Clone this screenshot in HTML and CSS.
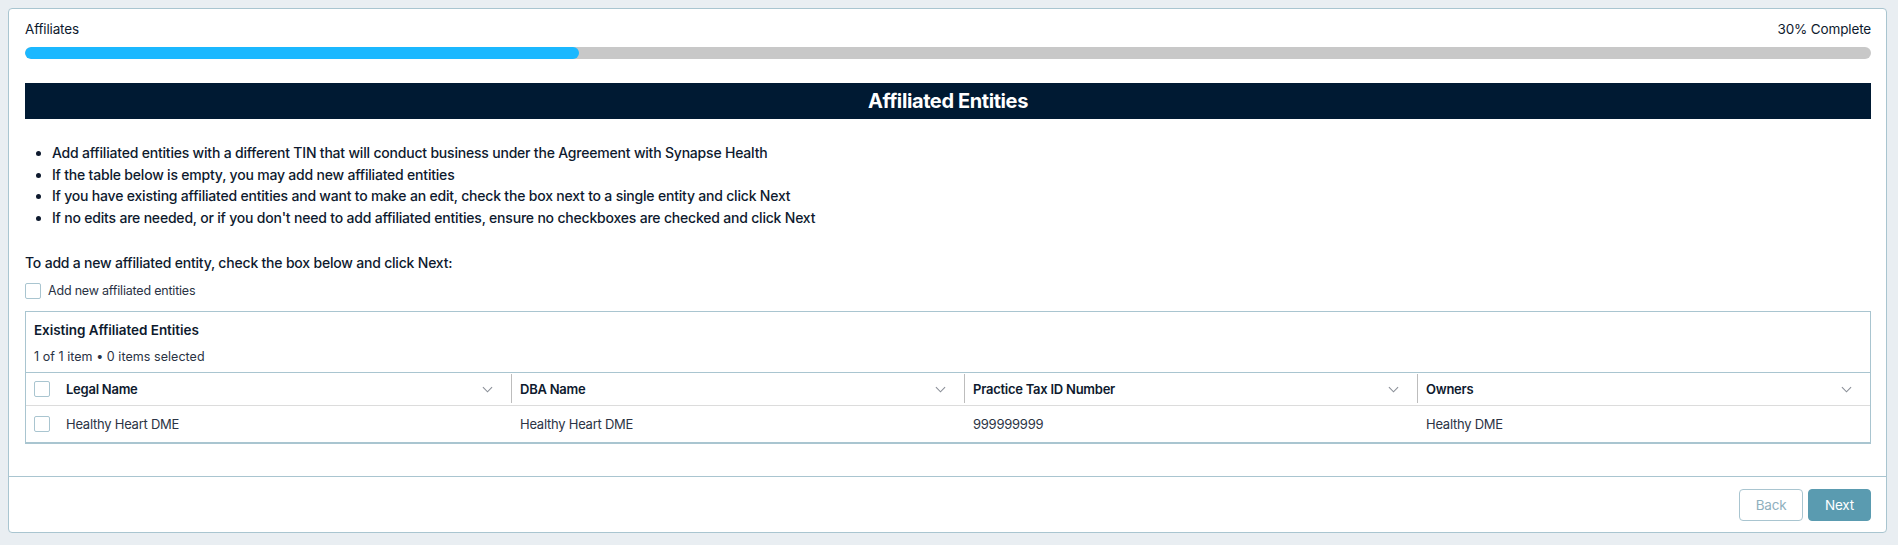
FILE: index.html
```html
<!DOCTYPE html>
<html lang="en">
<head>
<meta charset="utf-8">
<title>Affiliates</title>
<link rel="stylesheet" href="styles.css">
</head>
<body>
<div class="card">
  <div class="card-body">
    <div class="progress-head">
      <span class="step">Affiliates</span>
      <span class="pct">30% Complete</span>
    </div>
    <div class="track"><div class="fill" style="width:30%"></div></div>

    <h1 class="banner">Affiliated Entities</h1>

    <ul class="bullets">
      <li>Add affiliated entities with a different TIN that will conduct business under the Agreement with Synapse Health</li>
      <li>If the table below is empty, you may add new affiliated entities</li>
      <li>If you have existing affiliated entities and want to make an edit, check the box next to a single entity and click Next</li>
      <li>If no edits are needed, or if you don't need to add affiliated entities, ensure no checkboxes are checked and click Next</li>
    </ul>

    <p class="instruction">To add a new affiliated entity, check the box below and click Next:</p>
    <label class="check-row"><span class="box"></span><span>Add new affiliated entities</span></label>

    <div class="grid-wrap">
      <div class="grid-title">Existing Affiliated Entities</div>
      <div class="grid-meta">1 of 1 item • 0 items selected</div>
      <div class="grid">
        <div class="row head">
          <div class="cell sel"><span class="box"></span></div>
          <div class="cell first">Legal Name<svg class="chev" viewBox="0 0 12 7"><path d="M1 1l5 5 5-5"/></svg></div>
          <div class="cell">DBA Name<svg class="chev" viewBox="0 0 12 7"><path d="M1 1l5 5 5-5"/></svg></div>
          <div class="cell">Practice Tax ID Number<svg class="chev" viewBox="0 0 12 7"><path d="M1 1l5 5 5-5"/></svg></div>
          <div class="cell">Owners<svg class="chev" viewBox="0 0 12 7"><path d="M1 1l5 5 5-5"/></svg></div>
        </div>
        <div class="row data">
          <div class="cell sel"><span class="box"></span></div>
          <div class="cell first">Healthy Heart DME</div>
          <div class="cell">Healthy Heart DME</div>
          <div class="cell">999999999</div>
          <div class="cell">Healthy DME</div>
        </div>
      </div>
    </div>
  </div>
  <div class="card-foot">
    <button class="btn back">Back</button>
    <button class="btn next">Next</button>
  </div>
</div>
</body>
</html>
```

FILE: styles.css
```css
* { box-sizing: border-box; }
html, body { margin: 0; padding: 0; }
body {
  background: #e9eef2;
  padding: 8px 11px 0 8px;
  font-family: Inter, "Noto Sans", sans-serif;
  color: #0e1a2e;
}
.card {
  background: #fff;
  border: 1px solid #a9c5d0;
  border-radius: 4px;
}
.card-body { padding: 10px 15px 32px 16px; }
.progress-head {
  display: flex;
  justify-content: space-between;
  font-size: 13.5px;
  line-height: 20px;
  letter-spacing: -0.15px;
  color: #0e1a2e;
}
.track {
  margin-top: 8px;
  height: 12px;
  border-radius: 6px;
  background: #c8c8c8;
  overflow: hidden;
}
.fill { height: 100%; background: #1bb8ff; border-radius: 6px; }
.banner {
  margin: 24px 0 0;
  height: 36px;
  background: #001a33;
  color: #fff;
  font-size: 20px;
  font-weight: 700;
  letter-spacing: -0.4px;
  line-height: 36px;
  text-align: center;
}
.bullets {
  margin: 23px 0 0;
  padding-left: 27px;
  font-size: 14px;
  font-weight: 500;
  line-height: 21.5px;
  letter-spacing: -0.2px;
  color: #0e1a2e;
}
.instruction {
  margin: 25px 0 0;
  font-size: 14px;
  font-weight: 500;
  line-height: 20px;
  letter-spacing: -0.2px;
}
.check-row {
  display: flex;
  align-items: center;
  gap: 7px;
  margin-top: 10px;
  font-size: 12.5px;
  line-height: 16px;
  letter-spacing: -0.2px;
  color: #2a3344;
}
.box {
  display: inline-block;
  width: 16px;
  height: 16px;
  border: 1px solid #a9c5d0;
  border-radius: 2px;
  background: #fff;
  flex: none;
}
.grid-wrap {
  margin-top: 12px;
  border: 1px solid #a9c5d0;
  border-bottom: 2px solid #a9c5d0;
}
.grid-title {
  padding: 8px 8px 0;
  font-size: 13.5px;
  font-weight: 600;
  line-height: 20px;
  letter-spacing: -0.05px;
  color: #0e1a2e;
}
.grid-meta {
  padding: 7px 8px 5px;
  font-size: 12.5px;
  line-height: 20px;
  letter-spacing: 0.05px;
  color: #2a3344;
}
.grid { border-top: 1px solid #a9c5d0; }
.row {
  display: grid;
  grid-template-columns: 32px repeat(4, 1fr);
}
.row.head { height: 33px; border-bottom: 1px solid #dcdcdc; }
.row.data { height: 36px; }
.cell {
  display: flex;
  align-items: center;
  padding: 0 9px;
  position: relative;
  font-size: 13px;
  letter-spacing: -0.25px;
}
.cell.sel { padding: 0 0 0 8px; }
.cell.first { padding-left: 8px; }
.head .cell { font-weight: 600; color: #0e1a2e; }
.head .cell + .cell + .cell::before {
  content: "";
  position: absolute;
  left: 0;
  top: 1px;
  bottom: 2px;
  width: 1px;
  background: #bdbdbd;
}
.data .cell { color: #2c3445; }
.chev {
  width: 11px;
  height: 7px;
  margin-left: auto;
  margin-right: 9px;
  flex: none;
  fill: none;
  stroke: #8a8f98;
  stroke-width: 1.2;
}
.card-foot {
  border-top: 1px solid #a9c5d0;
  display: flex;
  justify-content: flex-end;
  gap: 5px;
  padding: 12px 15px 11px;
}
.btn {
  height: 32px;
  border-radius: 4px;
  font-family: Inter, "Noto Sans", sans-serif;
  font-size: 13.5px;
  letter-spacing: -0.2px;
  cursor: pointer;
}
.btn.back {
  width: 64px;
  background: #fff;
  border: 1px solid #a9c5d0;
  color: #8fb0be;
}
.btn.next {
  width: 63px;
  background: #5a9bb0;
  border: 1px solid #5a9bb0;
  color: #fff;
}
```
